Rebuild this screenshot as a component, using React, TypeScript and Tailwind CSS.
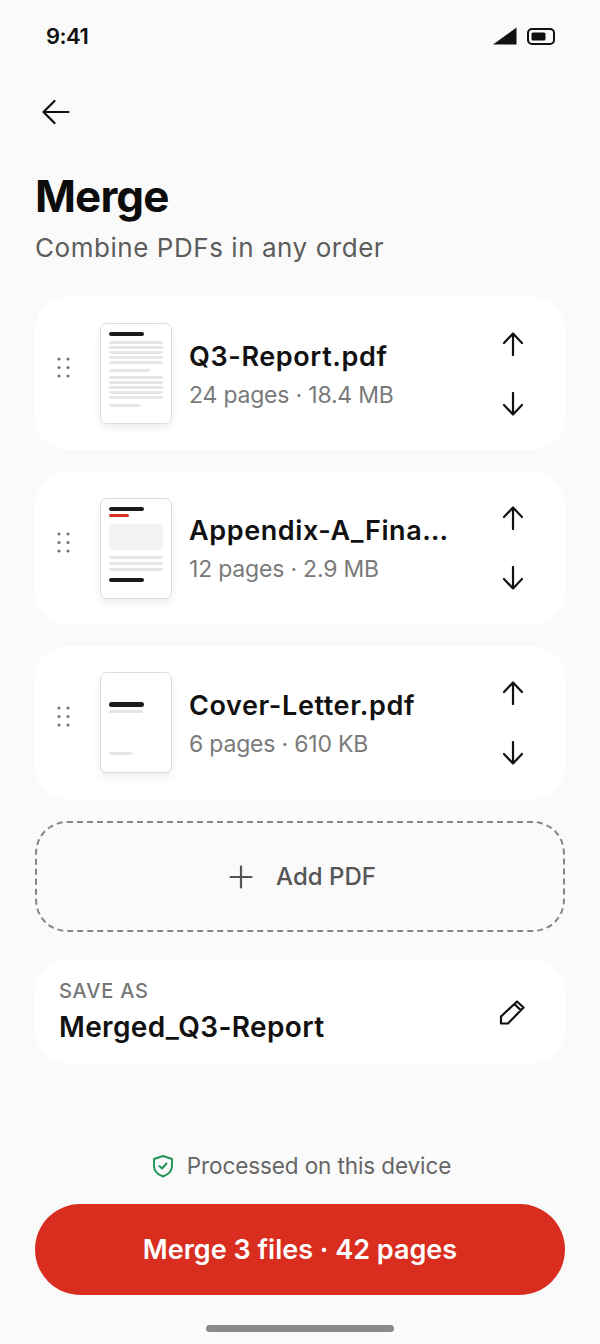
import React from 'react';

function ArrowUp() {
  return (
    <svg width="22" height="24" viewBox="0 0 22 24" fill="none" stroke="#111" strokeWidth="2.2" strokeLinecap="round" strokeLinejoin="round">
      <path d="M11 1.5V23M2 11L11 1.5L20 11" />
    </svg>
  );
}

function ArrowDown() {
  return (
    <svg width="22" height="24" viewBox="0 0 22 24" fill="none" stroke="#111" strokeWidth="2.2" strokeLinecap="round" strokeLinejoin="round">
      <path d="M11 1V22.5M2 13L11 22.5L20 13" />
    </svg>
  );
}

function DragDots() {
  return (
    <svg width="14" height="21" viewBox="0 0 14 21" fill="#777">
      {[2, 10.5, 19].map((y) => (
        <g key={y}>
          <circle cx="2" cy={y} r="1.6" />
          <circle cx="11" cy={y} r="1.6" />
        </g>
      ))}
    </svg>
  );
}

const GREY = '#e6e6e6';
const DARK = '#1c1c1c';

function Line({ y, w = 54, h = 3, c = GREY }: { y: number; w?: number; h?: number; c?: string }) {
  return <rect x="9" y={y} width={w} height={h} rx={h / 2} fill={c} />;
}

function ThumbReport() {
  return (
    <>
      <Line y={9} w={35} h={4} c={DARK} />
      {[18, 23, 28, 33, 38].map((y) => <Line key={y} y={y} />)}
      <Line y={46} w={41} />
      {[53, 58, 63, 68, 73].map((y) => <Line key={y} y={y} />)}
      <Line y={81} w={31} />
    </>
  );
}

function ThumbAppendix() {
  return (
    <>
      <Line y={9} w={35} h={4} c={DARK} />
      <Line y={16} w={20} h={3} c="#d92d20" />
      <rect x="9" y="26" width="54" height="26" rx="4" fill="#f3f3f3" />
      <Line y={58} />
      <Line y={64} />
      <Line y={70} />
      <Line y={80} w={35} h={4} c={DARK} />
    </>
  );
}

function ThumbCover() {
  return (
    <>
      <Line y={38} w={34} h={3} />
      <Line y={30} w={35} h={5} c={DARK} />
      <Line y={80} w={23} />
    </>
  );
}

function FileCard({ name, meta, thumb }: { name: string; meta: string; thumb: React.ReactNode }) {
  return (
    <div className="flex h-[153px] items-center rounded-[32px] bg-white">
      <div className="mb-[12px] ml-[22px] flex w-[43px] shrink-0">
        <DragDots />
      </div>
      <div className="h-[101px] w-[72px] shrink-0 rounded-[7px] border border-[#dcdcdc] bg-white shadow-[0_4px_10px_rgba(0,0,0,0.07)]">
        <svg width="70" height="99" viewBox="1 1 70 99">{thumb}</svg>
      </div>
      <div className="ml-[17px] flex w-[262px] min-w-0 flex-col pt-[3px]">
        <div className="text-[27px] leading-[36px] font-semibold tracking-[0.6px] whitespace-nowrap text-[#111]">{name}</div>
        <div className="mt-[3px] text-[23px] leading-[34px] tracking-[-0.2px] text-[#7a7a7a]">{meta}</div>
      </div>
      <div className="ml-[51px] flex flex-col items-center gap-[36px]">
        <ArrowUp />
        <ArrowDown />
      </div>
    </div>
  );
}

export default function App() {
  return (
    <div
      className="flex h-[1344px] w-[600px] flex-col overflow-hidden bg-[#fafafa]"
      style={{ fontFamily: '"Inter", "Liberation Sans", sans-serif' }}
    >
      {/* status bar */}
      <div className="flex h-[72px] shrink-0 items-center justify-between pr-[45px] pl-[46px]">
        <span className="text-[22px] font-semibold tracking-[-0.5px] text-[#111]">9:41</span>
        <div className="flex items-center gap-[10px]">
          <svg width="24" height="18" viewBox="0 0 24 18" fill="#111"><path d="M0 17.5L23.5 0.5V17.5Z" /></svg>
          <svg width="28" height="17" viewBox="0 0 28 17" fill="none">
            <rect x="1" y="1" width="26" height="15" rx="4" stroke="#111" strokeWidth="2" />
            <rect x="4.5" y="4.5" width="14" height="8" rx="1.5" fill="#111" />
          </svg>
        </div>
      </div>

      <div className="flex flex-1 flex-col px-[35px]">
        <svg className="mt-[27px] ml-[7px]" width="28" height="26" viewBox="0 0 28 26" fill="none" stroke="#111" strokeWidth="2.2" strokeLinecap="round" strokeLinejoin="round">
          <path d="M26.5 13H1.5M12.5 2L1.5 13L12.5 24" />
        </svg>

        <h1 className="mt-[43px] text-[44px] leading-[56px] font-bold tracking-[-0.9px] text-[#0c0c0c]">Merge</h1>
        <p className="mt-[6px] text-[26px] leading-[36px] tracking-[0.55px] text-[#5c5c5c]">Combine PDFs in any order</p>

        <div className="mt-[31px] flex flex-col gap-[21.5px]">
          <FileCard name="Q3-Report.pdf" meta="24 pages · 18.4 MB" thumb={<ThumbReport />} />
          <FileCard name="Appendix-A_Fina…" meta="12 pages · 2.9 MB" thumb={<ThumbAppendix />} />
          <FileCard name="Cover-Letter.pdf" meta="6 pages · 610 KB" thumb={<ThumbCover />} />
        </div>

        <div className="mt-[22px] flex h-[111px] items-center justify-center gap-[23px] rounded-[32px] border-2 border-dashed border-[#858585] pl-[5px]">
          <svg width="24" height="24" viewBox="0 0 24 24" fill="none" stroke="#555" strokeWidth="2.2" strokeLinecap="round">
            <path d="M12 1.5V22.5M1.5 12H22.5" />
          </svg>
          <span className="text-[24px] font-medium text-[#555]">Add PDF</span>
        </div>

        <div className="mt-[27px] flex h-[104px] items-center justify-between rounded-[32px] bg-white pr-[40px] pl-[24px]">
          <div className="flex flex-col pb-[1px]">
            <span className="text-[20px] leading-[28px] font-medium tracking-[0.8px] text-[#777]">SAVE AS</span>
            <span className="mt-[4px] text-[28px] leading-[36px] font-semibold tracking-[0.35px] text-[#111]">Merged_Q3-Report</span>
          </div>
          <svg className="mt-[2px]" width="26" height="26" viewBox="0 0 26 26" fill="none" stroke="#111" strokeWidth="2.2" strokeLinejoin="round">
            <path d="M2 17.5L18 2.5L24.5 8.5L9 24.5H2ZM15.5 5L22 11.5" />
          </svg>
        </div>

        <div className="mt-[88px] flex items-center justify-center gap-[13px] pl-[3px]">
          <svg width="22" height="24" viewBox="0 0 22 24" fill="none" stroke="#1f9254" strokeWidth="1.9" strokeLinecap="round" strokeLinejoin="round">
            <path d="M11 2L20 5V12C20 17 16 20.5 11 22.5C6 20.5 2 17 2 12V5Z" />
            <path d="M7.5 12L10 14.5L14.5 9.5" />
          </svg>
          <span className="text-[22.5px] leading-[30px] tracking-[-0.1px] text-[#666]">Processed on this device</span>
        </div>

        <div className="mt-[23px] flex h-[91px] shrink-0 items-center justify-center rounded-full bg-[#d92d20] pt-[2px] text-[27px] font-semibold text-white">
          Merge 3 files · 42 pages
        </div>

        <div className="mt-[30px] h-[7px] w-[188px] self-center rounded-full bg-[#8a8a8a]" />
      </div>
    </div>
  );
}
